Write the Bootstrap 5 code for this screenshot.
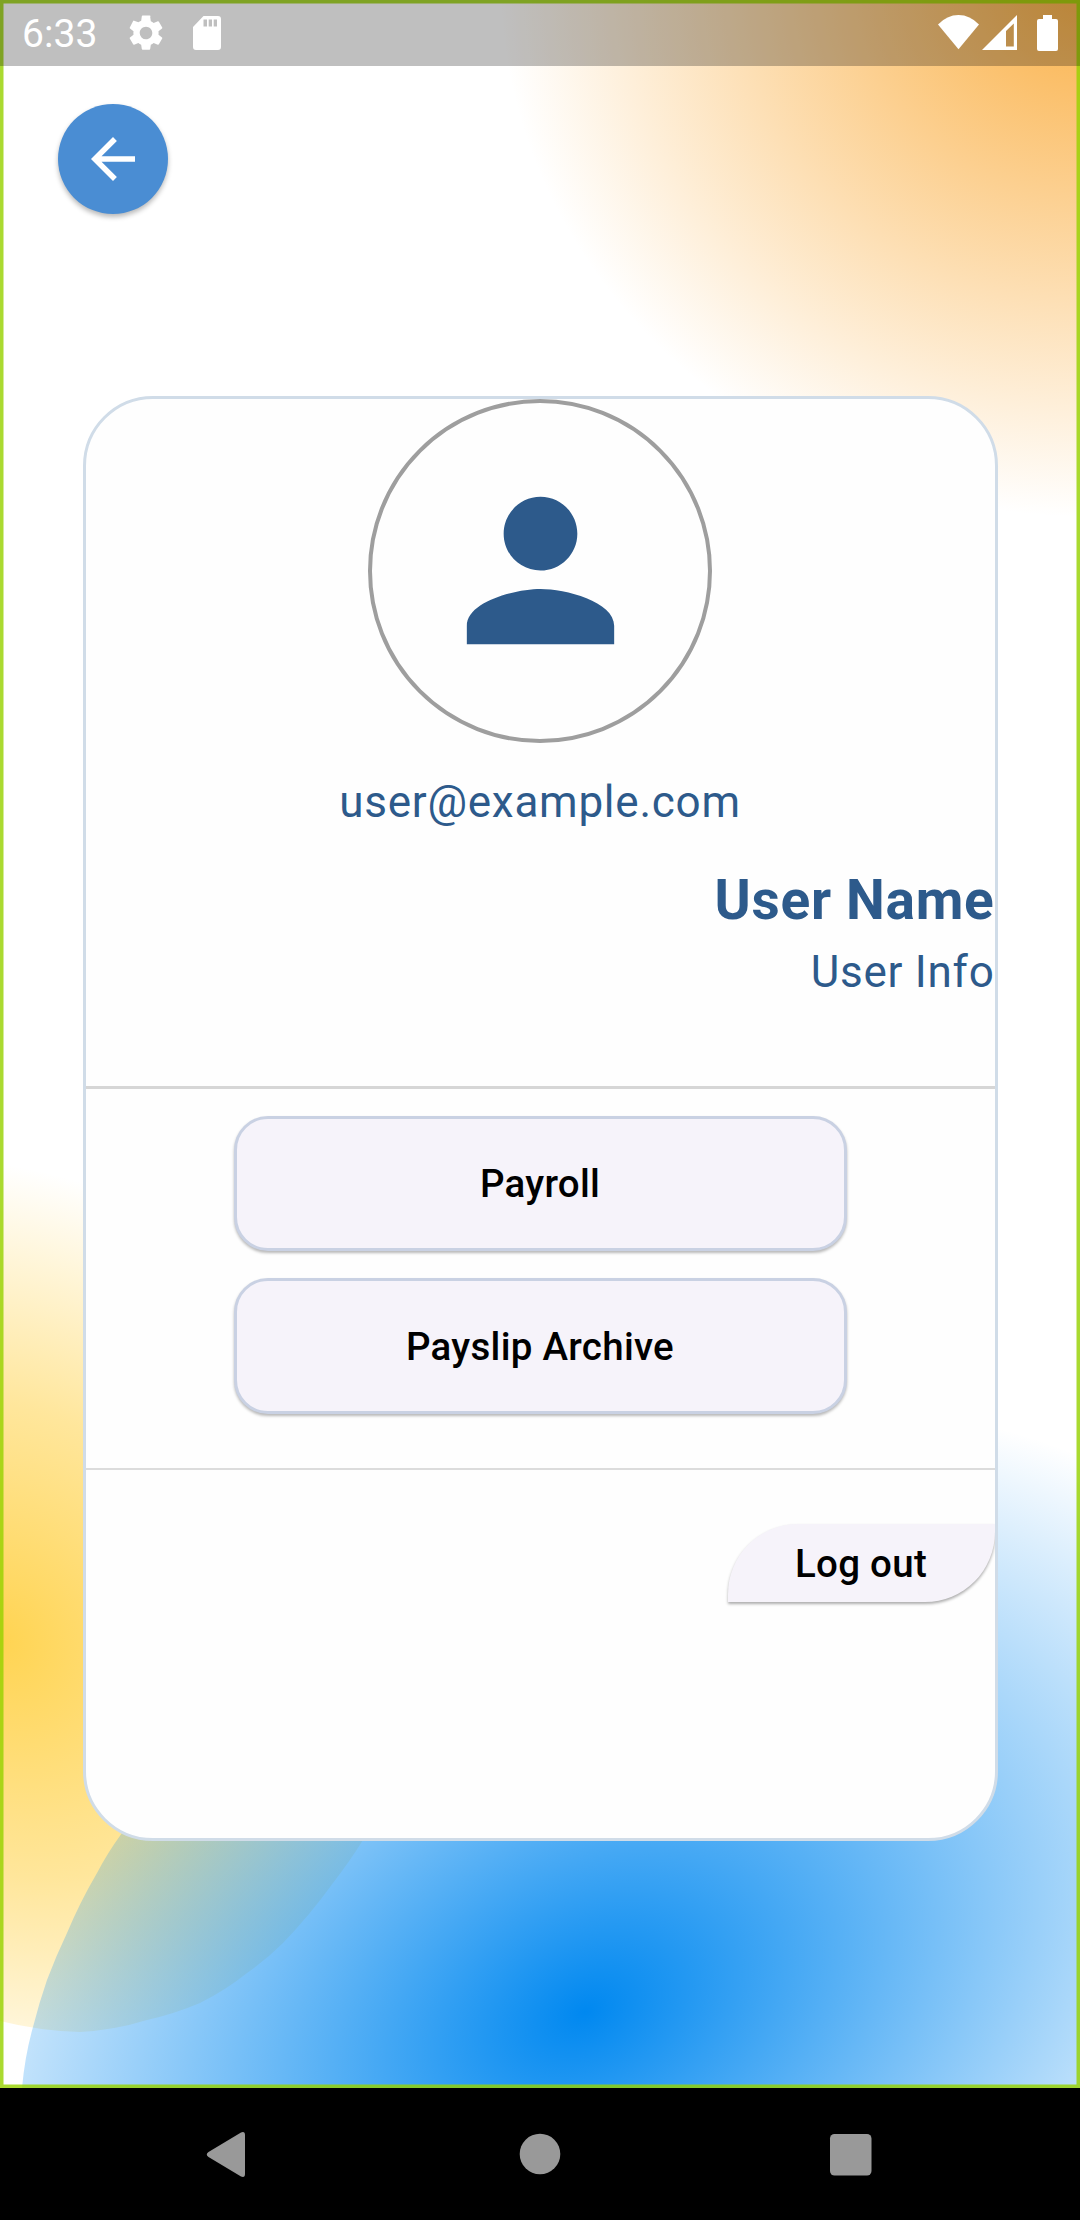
<!DOCTYPE html>
<html lang="en">
<head>
<meta charset="utf-8">
<meta name="viewport" content="width=device-width, initial-scale=1">
<title>Profile</title>
<link href="https://cdn.jsdelivr.net/npm/bootstrap@5.3.0/dist/css/bootstrap.min.css" rel="stylesheet">
<style>
  body { width: 1080px; height: 2220px; font-family: Roboto, sans-serif; background: #fff; overflow: hidden; }
  .screen { height: 2088px; }
  .backdrop { z-index: 0; }
  .statusbar { height: 66px; background: rgba(0,0,0,.25); padding: 0 22px 0 22px; }
  .clock { font-size: 39px; line-height: 46px; width: 103px; letter-spacing: .1px; padding-top: 1px; }
  .sdcard { margin-left: 25px; }
  .back-btn { width: 110px; height: 110px; margin: 38px 0 0 58px; background: #4a8dd3; box-shadow: 0 3px 5px rgba(0,0,0,.28); }
  .profile { width: 915px; height: 1445px; margin: 181.5px 0 0 82.5px; border: 3px solid #d0dce8; border-radius: 70px; background: #fefefe; color: #2d5a8b; overflow: hidden; }
  .avatar { width: 344px; height: 344px; border: 4px solid #9e9e9e; }
  .mail { font-size: 44px; line-height: 52px; letter-spacing: .75px; margin-top: 33px; }
  .uname { font-size: 55px; line-height: 64px; letter-spacing: .7px; margin-top: 40px; }
  .uinfo { font-size: 44px; line-height: 52px; letter-spacing: .75px; margin-top: 14px; }
  .rule-a { height: 3px; background: #d6d6d6; margin-top: 88px; }
  .rule-b { height: 2px; background: #dcdcdc; margin-top: 54px; }
  .actions { padding: 27px 148px 0; gap: 27px; }
  .action { height: 135.5px; border: 3px solid #c9d1e3; border-radius: 34px; background: #f6f3fa; font-size: 38.5px; font-weight: 500; letter-spacing: .275px; box-shadow: 0 2px 3px rgba(0,0,0,.28); color: #000; }
  .logout { width: 267px; height: 78px; margin-top: 54px; border: 0; border-radius: 70px 0 70px 0; background: #f6f3fa; font-size: 38.5px; font-weight: 500; letter-spacing: .275px; color: #000; box-shadow: 0 2px 3px rgba(0,0,0,.32); }
  .action span, .logout span { display: block; padding-top: 2px; }
  .sysnav { height: 132px; }
</style>
</head>
<body>
<main class="screen position-relative">
  <svg class="backdrop position-absolute top-0 start-0" width="1080" height="2088" viewBox="0 0 1080 2088" aria-hidden="true">
    <defs>
      <radialGradient id="gOrange" gradientUnits="userSpaceOnUse" cx="0" cy="0" r="1" gradientTransform="translate(1088 -20) scale(588 537)">
        <stop offset="0" stop-color="#fab046"/><stop offset="1" stop-color="#fab046" stop-opacity="0"/>
      </radialGradient>
      <radialGradient id="gYellow" gradientUnits="userSpaceOnUse" cx="0" cy="0" r="1" gradientTransform="translate(0 1640) rotate(42) scale(520 448)">
        <stop offset="0" stop-color="#ffd34e" stop-opacity=".98"/><stop offset=".5" stop-color="#ffd34e" stop-opacity=".56"/><stop offset="1" stop-color="#ffd34e" stop-opacity="0"/>
      </radialGradient>
      <radialGradient id="gBlue" gradientUnits="userSpaceOnUse" cx="0" cy="0" r="1" gradientTransform="translate(585 2012) rotate(-27) scale(800 545)">
        <stop offset="0" stop-color="#0088f0"/><stop offset="1" stop-color="#0088f0" stop-opacity="0"/>
      </radialGradient>
    </defs>
    <rect width="1080" height="620" fill="url(#gOrange)"/>
    <path d="M0 1100H480V1600Q440 1730 363 1840Q350 1861 333 1883Q310 1915 283 1943Q267 1959 247 1973Q226 1990 200 2003Q174 2014 147 2020Q115 2030 80 2032Q40 2031 0 2021Z" fill="url(#gYellow)"/>
    <path d="M22 2088Q25 2055 33 2027Q39 2003 47 1980Q56 1956 67 1933Q80 1902 97 1873Q108 1852 122 1833L420 1400H1080V2088Z" fill="url(#gBlue)"/>
    <rect x="1.75" y="1.75" width="1076.5" height="2084.5" fill="none" stroke="#96d200" stroke-opacity=".81" stroke-width="3.5"/>
  </svg>

  <div class="position-relative">
    <header class="statusbar d-flex align-items-center text-white">
      <span class="clock">6:33</span>
      <svg width="42" height="42" viewBox="0 0 24 24" fill="#fff"><path d="M19.14 12.94c.04-.3.06-.61.06-.94 0-.32-.02-.64-.07-.94l2.03-1.58a.49.49 0 0 0 .12-.61l-1.92-3.32a.49.49 0 0 0-.59-.22l-2.39.96c-.5-.38-1.03-.7-1.62-.94l-.36-2.54A.48.48 0 0 0 13.92 2h-3.84a.48.48 0 0 0-.47.41l-.36 2.54c-.59.24-1.13.57-1.62.94l-2.39-.96a.48.48 0 0 0-.59.22L2.74 8.87a.48.48 0 0 0 .12.61l2.03 1.58c-.05.3-.09.63-.09.94s.02.64.07.94l-2.03 1.58a.49.49 0 0 0-.12.61l1.92 3.32c.12.22.37.29.59.22l2.39-.96c.5.38 1.03.7 1.62.94l.36 2.54c.05.24.24.41.48.41h3.84c.24 0 .44-.17.47-.41l.36-2.54c.59-.24 1.13-.56 1.62-.94l2.39.96c.22.08.47 0 .59-.22l1.92-3.32a.48.48 0 0 0-.12-.61l-2.01-1.58zM12 15.6A3.61 3.61 0 0 1 8.4 12c0-1.98 1.62-3.6 3.6-3.6s3.6 1.62 3.6 3.6-1.62 3.6-3.6 3.6z"/></svg>
      <svg class="sdcard" width="30" height="36" viewBox="0 0 30 36" fill="#fff"><path fill-rule="evenodd" d="M11.500 1H26q3 0 3 3V32q0 3-3 3H4q-3 0-3-3V12ZM11.500 4.500V11.500H15V4.500ZM16.700 4.500V11.500H20V4.500ZM21.700 4.500V11.500H25V4.500Z"/></svg>
      <svg class="ms-auto" width="120" height="38" viewBox="938 14 120 38" fill="#fff"><path d="M938 24.500Q947 15 958.500 15T979 24.500L958.500 49.300Z"/><path fill-rule="evenodd" d="M982 50L1017 15V50ZM1006 31V46.500H1013.800V23.500Z"/><path d="M1043 15h9v4h4q2 0 2 2v28q0 2-2 2h-17q-2 0-2-2V21q0-2 2-2h4z"/></svg>
    </header>

    <button class="back-btn btn rounded-circle border-0 p-0 d-flex align-items-center justify-content-center" aria-label="Back">
      <svg width="66" height="66" viewBox="0 0 24 24" fill="#fff"><path d="M20 11H7.830l5.590-5.590L12 4l-8 8 8 8 1.410-1.410L7.830 13H20v-2z"/></svg>
    </button>

    <section class="profile d-flex flex-column">
      <div class="avatar rounded-circle align-self-center flex-shrink-0 d-flex align-items-center justify-content-center">
        <svg width="221" height="221" viewBox="0 0 24 24" fill="#2d5a8b"><path d="M12 12c2.210 0 4-1.790 4-4s-1.790-4-4-4-4 1.790-4 4 1.790 4 4 4zm0 2c-2.670 0-8 1.340-8 4v2h16v-2c0-2.660-5.330-4-8-4z"/></svg>
      </div>
      <div class="mail text-center">user@example.com</div>
      <div class="uname text-end fw-bold">User Name</div>
      <div class="uinfo text-end">User Info</div>
      <div class="rule-a"></div>
      <div class="actions d-flex flex-column">
        <button class="action btn p-0"><span>Payroll</span></button>
        <button class="action btn p-0"><span>Payslip Archive</span></button>
      </div>
      <div class="rule-b"></div>
      <button class="logout btn align-self-end p-0"><span>Log out</span></button>
    </section>
  </div>
</main>

<nav class="sysnav bg-black">
  <svg width="1080" height="132" viewBox="0 2088 1080 132" fill="#999"><path d="M241 2132.500Q245 2131 245 2135V2174Q245 2178 241 2176.500L208.500 2157Q205 2154.500 208.500 2152Z"/><circle cx="540" cy="2154" r="20.300"/><rect x="830" y="2134" width="41.500" height="41.500" rx="4.500"/></svg>
</nav>
<script src="https://cdn.jsdelivr.net/npm/bootstrap@5.3.0/dist/js/bootstrap.bundle.min.js"></script>
</body>
</html>
